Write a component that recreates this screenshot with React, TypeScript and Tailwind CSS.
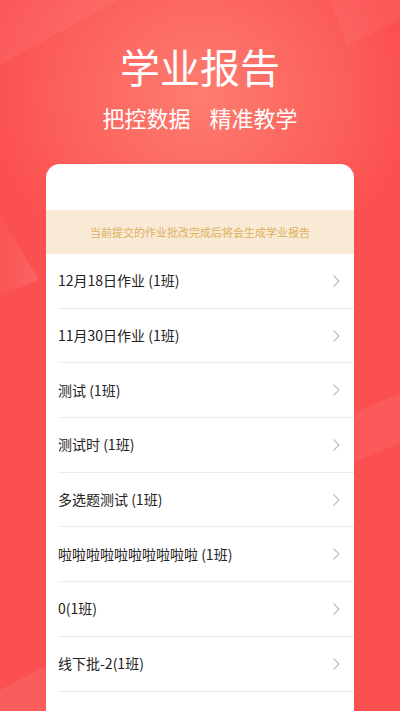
import { FC } from 'react';

const reports = [
  '12月18日作业 (1班)',
  '11月30日作业 (1班)',
  '测试 (1班)',
  '测试时 (1班)',
  '多选题测试 (1班)',
  '啦啦啦啦啦啦啦啦啦啦 (1班)',
  '0(1班)',
  '线下批-2(1班)',
];

const Chevron: FC = () => (
  <svg width="9" height="14" viewBox="0 0 9 14" fill="none">
    <path d="M1.5 1.5 L7 7 L1.5 12.5" stroke="#bcbcbc" strokeWidth="1.1" />
  </svg>
);

const Decor: FC = () => (
  <svg
    className="absolute inset-0 h-full w-full"
    viewBox="0 0 400 711"
    preserveAspectRatio="none"
  >
    <defs>
      <linearGradient id="tri" x1="0" y1="0" x2="1" y2="0">
        <stop offset="0" stopColor="#ffffff" stopOpacity="0.02" />
        <stop offset="1" stopColor="#ffffff" stopOpacity="0.12" />
      </linearGradient>
    </defs>
    <polygon points="0,0 118,0 0,65" fill="#ffffff" fillOpacity="0.06" />
    <polygon points="330,0 400,0 400,20 347,45" fill="#ffffff" fillOpacity="0.05" />
    <polygon points="0,216 39,280 0,296" fill="url(#tri)" />
    <polygon points="300,436 400,393 400,443 300,485" fill="#ffffff" fillOpacity="0.06" />
    <polygon points="0,690 50,664 50,711 0,711" fill="#ffffff" fillOpacity="0.07" />
  </svg>
);

const App: FC = () => {
  return (
    <div
      className="relative h-[711px] w-[400px] overflow-hidden bg-[#fb5050] bg-[radial-gradient(ellipse_210px_190px_at_200px_95px,#fd7c70_0%,#fc6a62_45%,#fb5050_100%)]"
      style={{ fontFamily: '"Noto Sans CJK SC", "Noto Sans", sans-serif' }}
    >
      <Decor />
      <div className="relative flex flex-col items-center">
        <h1 className="pt-[46px] text-[40px] font-normal leading-[40px] text-white">
          学业报告
        </h1>
        <div className="mt-[20px] flex gap-[19px] text-[22px] leading-[22px] text-white">
          <span>把控数据</span>
          <span>精准教学</span>
        </div>
        <div className="mt-[36px] h-[547px] w-[308px] overflow-hidden rounded-t-[14px] bg-white">
          <div className="h-[46px]" />
          <div className="flex h-[44px] items-center justify-center bg-[#f8ead5] text-[11px] text-[#e0af5d]">
            当前提交的作业批改完成后将会生成学业报告
          </div>
          <ul>
            {reports.map((name) => (
              <li key={name} className="pl-[12px]">
                <div className="flex h-[54.7px] items-center justify-between border-b border-[#ececec] pr-[13px]">
                  <span className="text-[14px] text-[#222222]">{name}</span>
                  <Chevron />
                </div>
              </li>
            ))}
          </ul>
        </div>
      </div>
    </div>
  );
};

export default App;
